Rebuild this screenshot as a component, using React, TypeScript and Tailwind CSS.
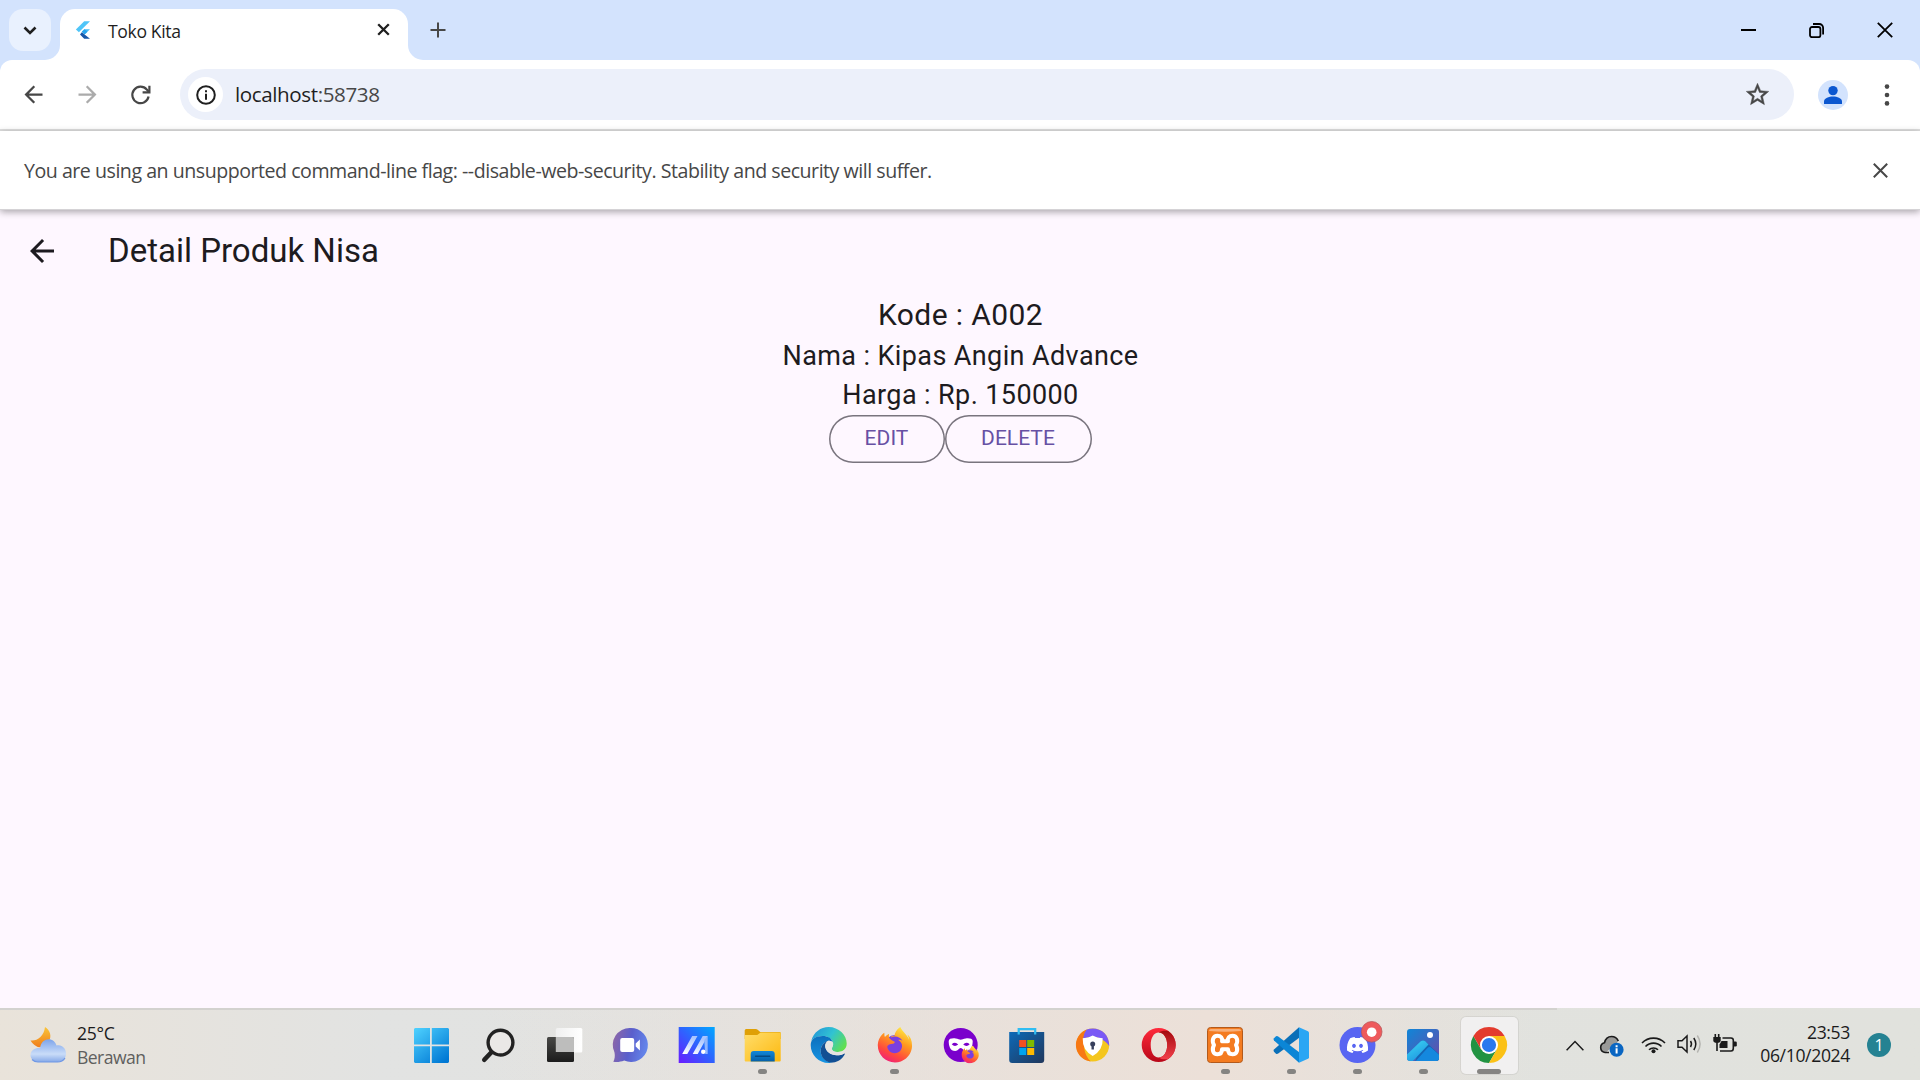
import type { ReactNode } from "react";
import { FaDiscord, FaFirefoxBrowser } from "react-icons/fa";

const UI = "font-['Open_Sans',sans-serif] whitespace-nowrap";

function BackArrow({ size, className }: { size: number; className?: string }) {
  return (
    <svg width={size} height={size} viewBox="0 0 24 24" fill="currentColor" className={className}>
      <path d="M20 11H7.83l5.59-5.59L12 4l-8 8 8 8 1.41-1.41L7.83 13H20v-2z" />
    </svg>
  );
}

function TabStrip() {
  return (
    <div className="flex h-[60px] items-start bg-[#d3e3fd]">
      <button className="relative z-10 mt-[9px] ml-[9px] flex size-[42px] items-center justify-center rounded-[14px] bg-[#e9f1fe]">
        <svg width="14" height="9" viewBox="0 0 14 9" fill="none" stroke="#1f1f1f" strokeWidth="2.6">
          <path d="M1.5 1.5 7 7l5.5-5.5" />
        </svg>
      </button>
      <div className="mt-[45px] -ml-[6px] size-[15px] bg-white">
        <div className="size-full rounded-br-[15px] bg-[#d3e3fd]" />
      </div>
      <div className="mt-[9px] flex h-[51px] w-[348px] items-start rounded-t-[15px] bg-white">
        <svg width="18" height="18" viewBox="0 0 18 18" className="mt-[12px] ml-[15px]">
          <path d="M9.2.3H15L3.9 11.2.9 8.6z" fill="#4fc5f8" />
          <path d="M9.2 8.3H15L9.6 13.2 6.8 10.8z" fill="#44bdf6" />
          <path d="M6.8 10.8l2.8-2.6 2.9 2.6-2.9 2.8z" fill="#29a5ee" />
          <path d="M6.8 11.2l2.8 2.4L15 17.8H9.2L5 13.4z" fill="#1857a8" />
        </svg>
        <span className={`${UI} mt-[10px] ml-[15px] w-[200px] text-[17.6px] leading-[24px] tracking-[-0.37px] text-[#1f1f1f]`}>Toko Kita</span>
        <svg width="13" height="13" viewBox="0 0 13 13" stroke="#1f1f1f" strokeWidth="2.3" className="mt-[14px] ml-[69px]">
          <path d="M1.2 1.2 11.8 11.8M11.8 1.2 1.2 11.8" />
        </svg>
      </div>
      <div className="mt-[45px] size-[15px] bg-white">
        <div className="size-full rounded-bl-[15px] bg-[#d3e3fd]" />
      </div>
      <svg width="16" height="16" viewBox="0 0 16 16" stroke="#474747" strokeWidth="2" className="mt-[22px] ml-[7px]">
        <path d="M8 .5v15M.5 8h15" />
      </svg>
      <div className="mr-[27px] ml-auto flex items-center gap-[53px] pt-[22px]">
        <svg width="15" height="15" viewBox="0 0 15 15" stroke="#000" strokeWidth="2">
          <path d="M0 7h15" />
        </svg>
        <svg width="15" height="15" viewBox="0 0 15 15" fill="none" stroke="#000" strokeWidth="1.8">
          <rect x="1" y="4" width="10.4" height="10.2" rx="2" />
          <path d="M4 1h6.2A3.9 3.9 0 0 1 14.1 5v6.4" />
        </svg>
        <svg width="16" height="16" viewBox="0 0 16 16" stroke="#000" strokeWidth="1.8">
          <path d="M.8.8 15.2 15.2M15.2.8.8 15.2" />
        </svg>
      </div>
    </div>
  );
}

function Toolbar() {
  return (
    <div className="bg-[#d3e3fd]">
      <div className="flex h-[71px] items-center rounded-t-[12px] border-b-2 border-[#dfdfdf] bg-white pl-[20px]">
        <BackArrow size={27} className="text-[#474747]" />
        <BackArrow size={27} className="ml-[27px] rotate-180 text-[#ababab]" />
        <svg width="24" height="24" viewBox="0 0 24 24" fill="none" stroke="#474747" strokeWidth="2.2" className="ml-[28px]">
          <path d="M19.6 13.5A8.2 8.2 0 1 1 17.8 6.6L20 9" />
          <path d="M20.4 2.8v6.6H13.6" />
        </svg>
        <div className="ml-[27px] flex h-[51px] w-[1614px] items-center rounded-full bg-[#ecf0fa] pl-[8px]">
          <div className="flex size-[35px] items-center justify-center rounded-full bg-white">
            <svg width="20" height="20" viewBox="0 0 20 20" fill="none" stroke="#1f1f1f" strokeWidth="2">
              <circle cx="10" cy="10" r="8.8" />
              <path d="M10 8.8v6M10 5.2v2" />
            </svg>
          </div>
          <span className={`${UI} ml-[12px] text-[20.6px] tracking-[-0.4px] text-[#1f1f1f]`}>
            localhost<span className="text-[#474747]">:58738</span>
          </span>
          <svg width="27" height="27" viewBox="0 0 24 24" fill="#474747" stroke="#474747" strokeWidth=".4" className="mr-[23px] ml-auto">
            <path d="M22 9.24l-7.19-.62L12 2 9.19 8.63 2 9.24l5.46 4.73L5.82 21 12 17.27 18.18 21l-1.63-7.03L22 9.24zM12 15.4l-3.76 2.27 1-4.28-3.32-2.88 4.38-.38L12 6.1l1.71 4.04 4.38.38-3.32 2.88 1 4.28L12 15.4z" />
          </svg>
        </div>
        <svg width="30" height="30" viewBox="0 0 30 30" className="ml-[24px]">
          <circle cx="15" cy="15" r="15" fill="#d3e3fd" />
          <circle cx="15" cy="10.6" r="4.7" fill="#0b57d0" />
          <path d="M6 24v-2.6c0-3.4 5-5 9-5s9 1.600 9 5V24z" fill="#0b57d0" />
        </svg>
        <svg width="6" height="22" viewBox="0 0 6 22" fill="#474747" className="ml-[36px]">
          <circle cx="3" cy="2.6" r="2.3" />
          <circle cx="3" cy="11" r="2.3" />
          <circle cx="3" cy="19.4" r="2.3" />
        </svg>
      </div>
    </div>
  );
}

function InfoBar() {
  return (
    <div className="relative flex h-[79px] items-center justify-between border-b border-[#d5d3d6] bg-white pr-[32px] pl-[24px] shadow-[0_2px_7px_rgba(0,0,0,0.34)]">
      <span className={`${UI} pt-[2px] text-[19.6px] tracking-[-0.48px] text-[#474747]`}>
        You are using an unsupported command-line flag: --disable-web-security. Stability and security will suffer.
      </span>
      <svg width="15" height="15" viewBox="0 0 15 15" stroke="#474747" strokeWidth="2">
        <path d="M.8.8 14.2 14.2M14.2.8.8 14.2" />
      </svg>
    </div>
  );
}

function OutlinedButton({ label, width }: { label: string; width: string }) {
  return (
    <button className={`flex h-[48px] items-center justify-center rounded-full pt-px text-[21px] text-[#6750a4] shadow-[inset_0_0_0_1.5px_#79747e] ${width}`}>
      {label}
    </button>
  );
}

function ProductPage() {
  return (
    <main className="flex grow flex-col bg-[#fef7ff] font-['Roboto',sans-serif] text-[#1d1b20]">
      <header className="flex h-[84px] items-center pb-[2px] pl-[24px]">
        <BackArrow size={36} />
        <h1 className="ml-[48px] text-[33px]">Detail Produk Nisa</h1>
      </header>
      <div className="flex flex-col items-center pl-px tracking-[0.39px]">
        <p className="text-[30px] leading-[42.9px]">Kode : A002</p>
        <p className="text-[27px] leading-[38.6px]">Nama : Kipas Angin Advance</p>
        <p className="text-[27px] leading-[38.6px]">Harga : Rp. 150000</p>
        <div className="mt-[0.5px] mr-[1px] flex tracking-[0.03px]">
          <OutlinedButton label="EDIT" width="w-[116px]" />
          <OutlinedButton label="DELETE" width="w-[147px]" />
        </div>
      </div>
    </main>
  );
}

function Art({ children }: { children: ReactNode }) {
  return (
    <svg width="36" height="36" viewBox="0 0 36 36" fill="none" className="overflow-visible">
      {children}
    </svg>
  );
}

function Grad({ id, from, to, x2 = 1, y2 = 1 }: { id: string; from: string; to: string; x2?: number; y2?: number }) {
  return (
    <linearGradient id={id} x1="0" y1="0" x2={x2} y2={y2}>
      <stop stopColor={from} />
      <stop offset="1" stopColor={to} />
    </linearGradient>
  );
}

const apps: { name: string; state?: "open" | "active"; art: ReactNode }[] = [
  {
    name: "Start",
    art: (
      <Art>
        <defs>
          <linearGradient id="win" gradientUnits="userSpaceOnUse" x1="1" y1="1" x2="30" y2="36">
            <stop stopColor="#4fd2ff" />
            <stop offset="1" stopColor="#0078d4" />
          </linearGradient>
        </defs>
        <path d="M2 1h15v16.5H1V2zM18.8 1H35l1 1v15.5H18.8zM1 19.2h16V36H2l-1-1zM18.8 19.2H36V35l-1 1H18.8z" fill="url(#win)" />
      </Art>
    ),
  },
  {
    name: "Search",
    art: (
      <Art>
        <path d="M14.3 23.2 5.3 32.8" stroke="#222" strokeWidth="4.6" strokeLinecap="round" />
        <circle cx="21.5" cy="15.6" r="12.400" stroke="#222" strokeWidth="3.400" fill="#eae8e6" />
      </Art>
    ),
  },
  {
    name: "Task view",
    art: (
      <Art>
        <defs>
          <Grad id="tv" from="#f0f0f0" to="#ffffff" y2={0} />
          <Grad id="tvd" from="#484846" to="#1c1c1c" x2={0} />
        </defs>
        <rect x="10.8" y="1" width="26.5" height="24.4" rx="1.5" fill="url(#tv)" />
        <rect x="2" y="10" width="27" height="25" rx="1.5" fill="url(#tvd)" />
        <path d="M10.8 10H27.5q1.5 0 1.5 1.5V25H10.8z" fill="#bdbdbc" />
      </Art>
    ),
  },
  {
    name: "Chat",
    art: (
      <Art>
        <defs>
          <linearGradient id="chat" x1="0" y1=".3" x2="1" y2=".5">
            <stop stopColor="#8c66a8" />
            <stop offset=".5" stopColor="#5a5fcc" />
            <stop offset="1" stopColor="#6487ec" />
          </linearGradient>
        </defs>
        <g transform="translate(.7 0)">
          <path d="M18.5 1a17 17 0 1 1-6 32.6C9 35 5 35.5 1.6 34.8 3 32 3.5 29 2.8 25.5A17 17 0 0 1 18.5 1z" fill="url(#chat)" />
          <rect x="8.5" y="11" width="14" height="14" rx="2" fill="#fff" />
          <path d="M24 16.5 28.2 12.5V23.5L24 19.5z" fill="#fff" />
        </g>
      </Art>
    ),
  },
  {
    name: "Armoury",
    art: (
      <Art>
        <defs>
          <linearGradient id="ma" x1="0" y1="1" x2="1" y2="0">
            <stop stopColor="#6a1bff" />
            <stop offset=".5" stopColor="#2f62ff" />
            <stop offset="1" stopColor="#00a8ff" />
          </linearGradient>
          <linearGradient id="bar" x1="0" y1="1" x2=".3" y2="0">
            <stop stopColor="#fff" />
            <stop offset="1" stopColor="#a9c4ff" />
          </linearGradient>
        </defs>
        <g transform="translate(.7 0)">
          <rect width="36" height="36" fill="url(#ma)" />
          <path d="M3.5 27 13.5 9h5.3L8.6 27zM14 27 24 9h5L19 27z" fill="url(#bar)" />
          <path d="M25.5 13 29 9v18h-2.5z" fill="#8fb6ff" />
          <circle cx="24.5" cy="24.8" r="2.2" fill="#fff" />
        </g>
      </Art>
    ),
  },
  {
    name: "File Explorer",
    state: "open",
    art: (
      <Art>
        <defs>
          <Grad id="fold" from="#ffdd6b" to="#fdb90f" />
          <Grad id="tray" from="#1287d8" to="#0560a8" x2={0} />
        </defs>
        <g transform="translate(.7 0)">
          <path d="M0 3.5Q0 2 1.5 2H11q1.2 0 2 .8L15.5 5H35q1 0 1 1v6H0z" fill="#dfa006" />
          <path d="M0 8h12.5l3.5-2.5H36V33.5q0 1-1 1H1q-1 0-1-1z" fill="url(#fold)" />
          <path d="M6 34.5V27q0-3 3-3H27q3 0 3 3v7.5z" fill="url(#tray)" />
          <path d="M11 29.3H25" stroke="#054a83" strokeWidth="1.6" strokeLinecap="round" />
        </g>
      </Art>
    ),
  },
  {
    name: "Edge",
    art: (
      <Art>
        <defs>
          <linearGradient id="e1" x1="0" y1=".2" x2="1" y2=".7">
            <stop stopColor="#2296d8" />
            <stop offset=".5" stopColor="#31c3d2" />
            <stop offset="1" stopColor="#62e04c" />
          </linearGradient>
          <Grad id="e2" from="#0c6fbd" to="#1794e2" x2={0} />
        </defs>
        <g transform="translate(.7 0)">
          <path d="M.5 14C3 5 10 0 18 0 28 0 36 8 36 16.5 36 22 32 25 27 25c-4 0-6-1.500-6-3s1.500-2 1.500-5c0-5-5.500-8-10.500-8S3 10.500.5 14z" fill="url(#e1)" />
          <path d="M12 9C5 9 0 12 0 18c0 10 8 18 18 18 1.500 0 3 0 4-.4-7-.6-12-5.600-12-11.600 0-5 3-8.500 7-10 2-.8 4.500.2 5.300 2C21 11 17 9 12 9z" fill="url(#e2)" />
          <path d="M17 14c-4 1.500-7 5-7 10 0 7 6 12 12 11.600 6-.6 10-4.600 12-8.100.3-1-.5-1.200-1-.8-2 1.100-4 1.600-7 1.600-6 0-11.500-4.300-11.500-9.300 0-2 1-4 2.500-5z" fill="#124f94" />
          <path d="M17 14c2-.8 4.500.2 5.300 2 .5 2.500-.8 4-1.100 5.200-.3 1.300 1 3.300 4.300 3.700 3.500.4 6.500-.2 9-2.400-.3 2-.6 3-1.500 4.200-2 1.100-4 1.600-7 1.600-6 0-11.500-4.300-11.500-9.300 0-2 1-4 2.500-5z" fill="#e6e4e2" />
        </g>
      </Art>
    ),
  },
  {
    name: "Firefox",
    state: "open",
    art: (
      <Art>
        <defs>
          <linearGradient id="ff" x1=".8" y1="0" x2=".3" y2="1">
            <stop stopColor="#fff34a" />
            <stop offset=".4" stopColor="#ff9a1f" />
            <stop offset=".75" stopColor="#ff4a3d" />
            <stop offset="1" stopColor="#f0207a" />
          </linearGradient>
        </defs>
        <g transform="translate(.9 0)">
          <circle cx="18" cy="18" r="10" fill="#7a3fe0" />
          <FaFirefoxBrowser x="0" y="0" size={36} fill="url(#ff)" />
        </g>
      </Art>
    ),
  },
  {
    name: "Firefox Private",
    art: (
      <Art>
        <g transform="translate(.7 0)">
          <circle cx="18" cy="18" r="17" fill="#7a00cc" />
          <path d="M6 14c0-2.500 4-3 7-2.500 2.500.3 3.500 1.200 5 1.200s2.500-.9 5-1.200c3-.5 7 0 7 2.500 0 5-1.500 10-6.500 10-3 0-3.500-3-5.500-3s-2.500 3-5.500 3C7.500 24 6 19 6 14z" fill="#fff" />
          <path d="M9 17.300q3.500-3 6.500.3-3.500 3-6.500-.3zM20.500 17.600q3-3.300 6.500-.3-3 3.300-6.500.3z" fill="#7a00cc" />
          <circle cx="27.800" cy="27.500" r="5" fill="#7a3fe0" />
          <FaFirefoxBrowser x="18.500" y="18.500" size={18} fill="url(#ff)" />
        </g>
      </Art>
    ),
  },
  {
    name: "Microsoft Store",
    art: (
      <Art>
        <defs>
          <Grad id="store" from="#0c6ab8" to="#21375c" />
        </defs>
        <g transform="translate(.7 0)">
          <path d="M10 7V2.200H26.500V7" stroke="#30bdf2" strokeWidth="2.200" />
          <path d="M.5 5H35.500V33q0 3-3 3H3.500q-3 0-3-3z" fill="url(#store)" />
          <path d="M10 5v2.500M26.500 5v2.500" stroke="#30bdf2" strokeWidth="2.200" />
          <path d="M10.500 13h7v7h-7z" fill="#f25022" />
          <path d="M18.500 13h7v7h-7z" fill="#7fba00" />
          <path d="M10.500 21h7v7h-7z" fill="#00a4ef" />
          <path d="M18.500 21h7v7h-7z" fill="#ffb900" />
        </g>
      </Art>
    ),
  },
  {
    name: "Secure Browser",
    art: (
      <Art>
        <g transform="translate(.7 0)">
          <circle cx="18" cy="18" r="16.500" fill="#f4c61e" />
          <path d="M12 2.500A16.500 16.500 0 0 0 16 34.400C9 28 7 16 12 2.500z" fill="#f77813" />
          <path d="M12 2.600C22-1.500 35 5 34.500 19 28 10 18 8 8.500 12 9 8 10 5 12 2.600z" fill="#7a59f5" />
          <path d="M18 8.500q4 2.500 10 2.800.5 12-10 17.700Q7.500 23.300 8 11.300 14 11 18 8.500z" fill="#fff" />
          <circle cx="18" cy="17" r="2.500" fill="#38405c" />
          <path d="M16.800 17h2.400v5.500h-2.400z" fill="#38405c" />
        </g>
      </Art>
    ),
  },
  {
    name: "Opera",
    art: (
      <Art>
        <defs>
          <Grad id="op" from="#ff2a3c" to="#b80718" x2={0} />
          <Grad id="op2" from="#a30a10" to="#f2404a" x2={0} />
        </defs>
        <g transform="translate(.7 0)">
          <path fillRule="evenodd" d="M18 1a17 17 0 1 1 0 34 17 17 0 0 1 0-34zm0 4.500c-5 0-8 5.500-8 12.500s3 12.500 8 12.500S26.500 25 26.500 18 23 5.500 18 5.500z" fill="url(#op)" />
          <path d="M18 5.500c2-1.800 6-2.200 9.500-1.600a17 17 0 0 1 0 28.200c-3.500.6-7.500.2-9.500-1.600 5 0 8.500-5.500 8.500-12.500S23 5.500 18 5.500z" fill="url(#op2)" />
        </g>
      </Art>
    ),
  },
  {
    name: "XAMPP",
    state: "open",
    art: (
      <Art>
        <rect x=".5" y=".5" width="35" height="35" rx="3" fill="#f47b20" stroke="#b35a1c" />
        <path d="M2 4q0-2 2-2H32q2 0 2 2-16 1.500-32 0z" fill="#fff" opacity=".4" />
        <path d="M15 14.300H21C20 11 22.500 8.700 25.500 8.700c4.500 0 6 5 3.500 9.300 2.500 4.500 1 9.300-3.500 9.300-3 0-4.500-2-4.500-5H15c0 3-1.500 5-4.500 5C6 27.300 4.500 22.500 7 18 4.500 13.700 6 8.700 10.500 8.700 13.500 8.700 16 11 15 14.300z" stroke="#fff" strokeWidth="4" strokeLinejoin="round" />
      </Art>
    ),
  },
  {
    name: "VS Code",
    state: "open",
    art: (
      <Art>
        <path d="M26 .2 1 22.600q-1 1 0 2.100l2 2q1 .7 2.200-.1L26.500 10.500z" fill="#0a6fb8" />
        <path d="M26 35.800 1 13.400q-1-1 0-2.100l2-2q1-.7 2.200.1L26.500 25.500z" fill="#0b86d6" />
        <path d="M26 .2 35 4.300q1 .5 1 1.500V30.200q0 1-1 1.500L26 35.800z" fill="#2aa6f4" />
      </Art>
    ),
  },
  {
    name: "Discord",
    state: "open",
    art: (
      <Art>
        <g transform="translate(.5 0)">
          <circle cx="18" cy="18" r="18" fill="#5865f2" />
          <FaDiscord x="6.500" y="6.500" size={23} fill="#fff" />
          <circle cx="32.200" cy="4.800" r="10.300" fill="#ee5a5c" stroke="#b9585a" strokeWidth=".8" />
          <circle cx="32.200" cy="5.200" r="4.800" fill="#fff" />
        </g>
      </Art>
    ),
  },
  {
    name: "Photos",
    state: "open",
    art: (
      <Art>
        <defs>
          <Grad id="ph" from="#0f86d8" to="#6a4aa8" />
          <Grad id="ph2" from="#3fdcf5" to="#1c93e0" x2={0.6} />
          <clipPath id="phc">
            <rect x="2" y="2" width="32" height="32" rx="3" />
          </clipPath>
        </defs>
        <g clipPath="url(#phc)">
          <rect x="2" y="2" width="32" height="32" fill="url(#ph)" />
          <path d="M15.500 14.500q2.500-2 5 0L37 30v6H10z" fill="#1565b4" />
          <path d="M0 29.500 15.500 14.500q2.500-2 5 0l3 3L6 36H0z" fill="url(#ph2)" />
          <path d="M9 36 22.500 21q2-1.800 4 0L36 29.500V36z" fill="#1488de" />
        </g>
        <circle cx="25" cy="8" r="3" fill="#fff" />
      </Art>
    ),
  },
  {
    name: "Chrome",
    state: "active",
    art: (
      <Art>
        <path d="M2.400 9A18 18 0 0 0 18 36L25.800 22.500 10.200 22.500z" fill="#229342" />
        <path d="M33.600 9A18 18 0 0 1 18 36L25.800 22.500 18 9z" fill="#fbc116" />
        <path d="M2.400 9A18 18 0 0 1 33.600 9H18v9l-7.800 4.500z" fill="#e33b2e" />
        <circle cx="18" cy="18" r="9" fill="#fff" />
        <circle cx="18" cy="18" r="7.100" fill="#2a78ee" />
      </Art>
    ),
  },
];

function Weather() {
  return (
    <div className="flex w-[398px] items-center pl-[29px]">
      <svg width="38" height="38" viewBox="0 0 38 38">
        <defs>
          <Grad id="moon" from="#f9c53a" to="#f07d1a" x2={0} />
          <linearGradient id="cloud" x1="0" y1="0" x2="0" y2="1">
            <stop stopColor="#7da4ea" />
            <stop offset=".65" stopColor="#c9dcf8" />
            <stop offset="1" stopColor="#86a9e8" />
          </linearGradient>
        </defs>
        <path d="M16 1c5 3 7 9 4 14s-9 8-13 5c-2-1-4-3-5.500-5.500C8 15.500 15 10 16 1z" fill="url(#moon)" />
        <path d="M9 36a8 7 0 0 1-1.500-13.800c1-.4 2.500-.4 3.500-.1C12 16 16 13.300 19.500 13.300c4 0 7 2.700 8 6.200 5-1.500 9.500 2.500 9.500 8 0 5-3.500 8.500-8.500 8.500z" fill="url(#cloud)" />
        <path d="M3 33.500C5 35.500 7 36 9 36H28.500c3 0 6-1.500 7.500-4" fill="none" stroke="#6e97e6" strokeWidth="1.200" />
      </svg>
      <div className={`${UI} ml-[10px] text-[17.6px] leading-[24px]`}>
        <div className="tracking-[-0.3px] text-[#1b1b1b]">25°C</div>
        <div className="tracking-[-0.57px] text-[#5f5f5e]">Berawan</div>
      </div>
    </div>
  );
}

function Tray() {
  return (
    <div className="ml-auto flex items-center pr-[29px]">
      <svg width="18" height="11" viewBox="0 0 18 11" fill="none" stroke="#1b1b1b" strokeWidth="1.5">
        <path d="M.6 10.200 9 1.600l8.400 8.600" />
      </svg>
      <svg width="25" height="22" viewBox="0 0 25 22" className="mt-[1px] ml-[15px]">
        <path d="M6 18a5.200 5.200 0 0 1-.5-10.300C6.500 3.500 9.500 1.500 12.500 1.500c3 0 5.500 1.500 6.800 4.500L17 9z" fill="#9a9a98" />
        <path d="M10 17.500H6A5 5 0 0 1 5.500 7.700C6.500 3.500 9.500 1.500 12.500 1.500c3 0 5.500 1.500 6.800 4.500" fill="none" stroke="#1b1b1b" strokeWidth="1.6" />
        <circle cx="17.600" cy="14.800" r="7" fill="#0a66c2" />
        <path d="M17.600 13.200v5.300M17.600 10.200v2" stroke="#fff" strokeWidth="2" />
      </svg>
      <svg width="25" height="19" viewBox="0 0 25 19" fill="none" stroke="#1b1b1b" strokeWidth="1.6" className="mb-[2px] ml-[17px]">
        <path d="M1 8a16 16 0 0 1 23 0M4.500 11.500a11.200 11.200 0 0 1 16 0M8 14.800a6.400 6.400 0 0 1 9 0" />
        <circle cx="12.500" cy="16.300" r="2" fill="#1b1b1b" stroke="none" />
      </svg>
      <svg width="25" height="20" viewBox="0 0 25 20" fill="none" stroke="#1b1b1b" strokeWidth="1.5" className="mb-[2px] ml-[11px]">
        <path d="M1 6.800H5L10 2v16l-5-4.800H1zM13.500 7q2 3 0 6M16.800 4q4 6 0 12" />
        <path d="M20.300 1.500q5.600 8.500 0 17" stroke="#b5b5b1" />
      </svg>
      <svg width="24" height="19" viewBox="0 0 24 19" fill="none" stroke="#1b1b1b" strokeWidth="1.6" className="mb-[4px] ml-[11px]">
        <path d="M9.500 4H18q2.300 0 2.300 2.300v8Q20.300 17 18 17H7" />
        <path d="M8.500 7H14.500V14H6.500V10.500z" fill="#1b1b1b" stroke="none" />
        <path d="M21 7.500h1.500q1.300 0 1.300 1.300v2.400q0 1.300-1.300 1.300H21z" fill="#1b1b1b" stroke="none" />
        <path d="M.3 3H7.700V6.500q0 2.300-3.700 2.500Q.3 8.800.3 6.500z" fill="#1b1b1b" stroke="none" />
        <path d="M2.300 0v3.500M5.700 0v3.500M4 8.500V17" />
      </svg>
      <div className={`${UI} ml-[23px] pb-[2px] text-right text-[17.6px] leading-[23px] tracking-[-0.36px] text-[#1b1b1b]`}>
        <div>23:53</div>
        <div>06/10/2024</div>
      </div>
      <div className={`${UI} ml-[17px] flex size-[24px] items-center justify-center rounded-full bg-[#258292] text-[16px] text-white`}>1</div>
    </div>
  );
}

function Taskbar() {
  return (
    <footer className="flex h-[72px] flex-col bg-linear-to-r from-[#e9e3da] via-[#e2e3e2] via-20% to-[#e1e2dd]">
      <div className="h-[2px] w-[1557px] bg-[#d3d2cf]" />
      <div className="flex h-[70px] bg-linear-to-r from-transparent from-25% via-[#ece0d8] via-63% to-transparent to-80%">
        <Weather />
        <div className="flex">
          {apps.map((app) => (
            <div key={app.name} className="flex w-[66.125px] justify-center pt-[7px]">
              <div
                className={
                  app.state === "active"
                    ? "flex h-[57px] w-[57px] flex-col items-center rounded-[5px] bg-[#f1f0f0] pt-[10px] shadow-[0_0_0_1px_rgba(0,0,0,0.06)]"
                    : "flex h-[57px] w-[57px] flex-col items-center pt-[10px]"
                }
              >
                {app.art}
                {app.state === "open" && <div className="mt-[6px] ml-px h-[5px] w-[9px] rounded-full bg-[#858482]" />}
                {app.state === "active" && <div className="mt-[6px] h-[5px] w-[24px] rounded-full bg-[#858482]" />}
              </div>
            </div>
          ))}
        </div>
        <Tray />
      </div>
    </footer>
  );
}

export default function App() {
  return (
    <div className="flex h-[1080px] w-[1920px] flex-col overflow-hidden">
      <TabStrip />
      <Toolbar />
      <InfoBar />
      <ProductPage />
      <Taskbar />
    </div>
  );
}
